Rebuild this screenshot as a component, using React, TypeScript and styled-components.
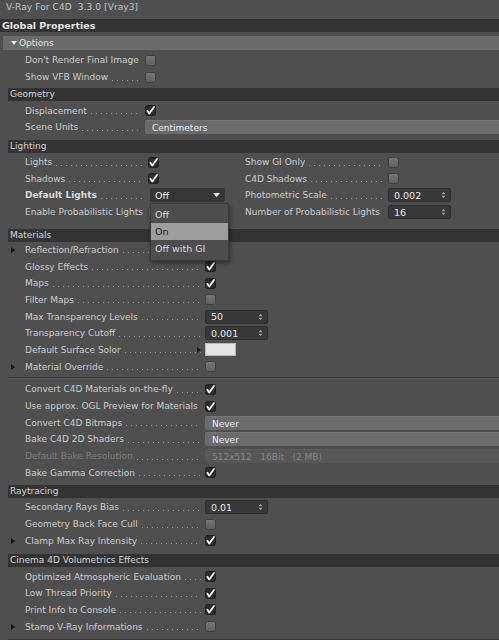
import React from "react";
import styled, { createGlobalStyle } from "styled-components";

type Control =
  | { kind: "check"; on: boolean }
  | { kind: "spin"; value: string }
  | { kind: "select"; value: string; disabled?: boolean }
  | { kind: "menu"; value: string; options: string[]; active: number }
  | { kind: "swatch"; color: string };

type Item = {
  label: string;
  control: Control;
  bold?: boolean;
  expand?: boolean;
  dim?: boolean;
};

const chk = (on: boolean): Control => ({ kind: "check", on });

const options: Item[] = [
  { label: "Don't Render Final Image", control: chk(false) },
  { label: "Show VFB Window", control: chk(false) },
];

const geometry: Item[] = [
  { label: "Displacement", control: chk(true) },
  { label: "Scene Units", control: { kind: "select", value: "Centimeters" } },
];

const lightingLeft: Item[] = [
  { label: "Lights", control: chk(true) },
  { label: "Shadows", control: chk(true) },
  {
    label: "Default Lights",
    bold: true,
    control: { kind: "menu", value: "Off", options: ["Off", "On", "Off with GI"], active: 1 },
  },
  { label: "Enable Probabilistic Lights", control: chk(false) },
];

const lightingRight: Item[] = [
  { label: "Show GI Only", control: chk(false) },
  { label: "C4D Shadows", control: chk(false) },
  { label: "Photometric Scale", control: { kind: "spin", value: "0.002" } },
  { label: "Number of Probabilistic Lights", control: { kind: "spin", value: "16" } },
];

const materialsA: Item[] = [
  { label: "Reflection/Refraction", expand: true, control: chk(false) },
  { label: "Glossy Effects", control: chk(true) },
  { label: "Maps", control: chk(true) },
  { label: "Filter Maps", control: chk(false) },
  { label: "Max Transparency Levels", control: { kind: "spin", value: "50" } },
  { label: "Transparency Cutoff", control: { kind: "spin", value: "0.001" } },
  { label: "Default Surface Solor", control: { kind: "swatch", color: "#e4e4e4" } },
  { label: "Material Override", expand: true, control: chk(false) },
];

const materialsB: Item[] = [
  { label: "Convert C4D Materials on-the-fly", control: chk(true) },
  { label: "Use approx. OGL Preview for Materials", control: chk(true) },
  { label: "Convert C4D Bitmaps", control: { kind: "select", value: "Never" } },
  { label: "Bake C4D 2D Shaders", control: { kind: "select", value: "Never" } },
  {
    label: "Default Bake Resolution",
    dim: true,
    control: { kind: "select", value: "512x512   16Bit   (2 MB)", disabled: true },
  },
  { label: "Bake Gamma Correction", control: chk(true) },
];

const raytracing: Item[] = [
  { label: "Secondary Rays Bias", control: { kind: "spin", value: "0.01" } },
  { label: "Geometry Back Face Cull", control: chk(false) },
  { label: "Clamp Max Ray Intensity", expand: true, control: chk(true) },
];

const volumetrics: Item[] = [
  { label: "Optimized Atmospheric Evaluation", control: chk(true) },
  { label: "Low Thread Priority", control: chk(true) },
  { label: "Print Info to Console", control: chk(true) },
  { label: "Stamp V-Ray Informations", expand: true, control: chk(false) },
];

const CheckBox = ({ on }: { on: boolean }) => (
  <Box $on={on}>
    {on && (
      <svg width="11" height="11" viewBox="0 0 11 11">
        <path
          d="M2.4 5.8 L4.2 8.6 L9 2"
          fill="none"
          stroke="#f2f2f2"
          strokeWidth="1.8"
          strokeLinecap="round"
          strokeLinejoin="round"
        />
      </svg>
    )}
  </Box>
);

const Arrows = () => (
  <svg width="5" height="8" viewBox="0 0 5 8">
    <path d="M0.5 3.2 L2.5 0.8 L4.5 3.2 Z" fill="#9a9a9a" />
    <path d="M0.5 4.8 L2.5 7.2 L4.5 4.8 Z" fill="#9a9a9a" />
  </svg>
);

const renderControl = (c: Control) => {
  switch (c.kind) {
    case "check":
      return <CheckBox on={c.on} />;
    case "spin":
      return (
        <Spin>
          <span>{c.value}</span>
          <Arrows />
        </Spin>
      );
    case "select":
      return <Select $disabled={c.disabled}>{c.value}</Select>;
    case "swatch":
      return (
        <SwatchWrap>
          <Tri $color="#1c1c1c" />
          <Swatch style={{ background: c.color }} />
        </SwatchWrap>
      );
    case "menu":
      return (
        <MenuWrap>
          <DarkSelect>
            <span>{c.value}</span>
            <svg width="7" height="4" viewBox="0 0 7 4">
              <path d="M0 0 L7 0 L3.5 4 Z" fill="#e8e8e8" />
            </svg>
          </DarkSelect>
          <Popup>
            {c.options.map((o, i) => (
              <PopupItem key={o} $active={i === c.active}>
                {o}
              </PopupItem>
            ))}
          </Popup>
        </MenuWrap>
      );
  }
};

const Rows = ({ items, lead, label }: { items: Item[]; lead: number; label: number }) => (
  <>
    {items.map((it) => (
      <Row key={it.label} $lead={lead} $label={label}>
        <Lead>{it.expand && <Tri $color="#151515" />}</Lead>
        <Label $bold={it.bold} $dim={it.dim}>
          <span>{it.label}</span>
          <Dots />
        </Label>
        <Cell>{renderControl(it.control)}</Cell>
      </Row>
    ))}
  </>
);

export default function App() {
  return (
    <>
      <GlobalStyle />
      <Panel>
        <Title>V-Ray For C4D  3.3.0 [Vray3]</Title>
        <MainHeader>Global Properties</MainHeader>
        <OptionsBar>
          <svg width="6" height="4" viewBox="0 0 6 4">
            <path d="M0 0 L6 0 L3 4 Z" fill="#ededed" />
          </svg>
          Options
        </OptionsBar>
        <Body $top={2} $bottom={3}>
          <Rows items={options} lead={25} label={120} />
        </Body>

        <Header>Geometry</Header>
        <Body $top={1} $bottom={4}>
          <Rows items={geometry} lead={25} label={120} />
        </Body>

        <Header>Lighting</Header>
        <Body $top={1} $bottom={8}>
          <TwoCols>
            <div>
              <Rows items={lightingLeft} lead={25} label={123} />
            </div>
            <div>
              <Rows items={lightingRight} lead={5} label={143} />
            </div>
          </TwoCols>
        </Body>

        <Header>Materials</Header>
        <Body $top={0} $bottom={2}>
          <Rows items={materialsA} lead={25} label={180} />
        </Body>
        <Divider />
        <Body $top={2} $bottom={4}>
          <Rows items={materialsB} lead={25} label={180} />
        </Body>

        <Header>Raytracing</Header>
        <Body $top={1} $bottom={5}>
          <Rows items={raytracing} lead={25} label={180} />
        </Body>

        <Header>Cinema 4D Volumetrics Effects</Header>
        <Body $top={1} $bottom={4}>
          <Rows items={volumetrics} lead={25} label={180} />
        </Body>
        <Divider />
      </Panel>
    </>
  );
}

const GlobalStyle = createGlobalStyle`
  html, body {
    margin: 0;
    padding: 0;
    background: #4f4f4f;
  }
  #root {
    width: 499px;
    height: 640px;
  }
`;

const Panel = styled.div`
  width: 499px;
  height: 640px;
  overflow: hidden;
  background: #4f4f4f;
  color: #cdcdcd;
  font-family: "DejaVu Sans", "Liberation Sans", sans-serif;
  font-size: 9px;
`;

const Title = styled.div`
  height: 19px;
  padding-left: 6px;
  line-height: 15px;
  white-space: pre;
  color: #c4c4c4;
  letter-spacing: 0.1px;
`;

const MainHeader = styled.div`
  height: 13px;
  line-height: 13px;
  padding-left: 2px;
  margin-bottom: 4px;
  background: #333333;
  color: #e2e2e2;
  font-weight: bold;
  font-size: 9.5px;
`;

const OptionsBar = styled.div`
  height: 14px;
  margin-left: 3px;
  padding-left: 8px;
  display: flex;
  align-items: center;
  gap: 2px;
  background: #6a6a6a;
  color: #e4e4e4;
`;

const Header = styled.div`
  height: 13px;
  line-height: 13px;
  margin-left: 8px;
  padding-left: 2px;
  background: #333333;
  color: #d4d4d4;
`;

const Body = styled.div<{ $top: number; $bottom: number }>`
  padding: ${(p) => p.$top}px 0 ${(p) => p.$bottom}px;
`;

const TwoCols = styled.div`
  display: grid;
  grid-template-columns: 240px 1fr;
`;

const Row = styled.div<{ $lead: number; $label: number }>`
  height: 16.7px;
  display: grid;
  grid-template-columns: ${(p) => p.$lead}px ${(p) => p.$label}px 1fr;
  align-items: center;
`;

const Lead = styled.div`
  display: flex;
  align-items: center;
  padding-left: 11px;
`;

const Tri = styled.span<{ $color: string }>`
  width: 0;
  height: 0;
  border-left: 4px solid ${(p) => p.$color};
  border-top: 3px solid transparent;
  border-bottom: 3px solid transparent;
`;

const Label = styled.div<{ $bold?: boolean; $dim?: boolean }>`
  display: flex;
  align-items: center;
  min-width: 0;
  white-space: nowrap;
  padding-right: 4px;
  font-weight: ${(p) => (p.$bold ? "bold" : "normal")};
  color: ${(p) => (p.$dim ? "#7d7d7d" : p.$bold ? "#dadada" : "#cdcdcd")};
`;

const Dots = styled.span`
  flex: 1;
  min-width: 0;
  height: 1px;
  margin: 6px 0 0 4px;
  background-image: linear-gradient(to right, #959595 1px, transparent 1px);
  background-size: 5px 1px;
  background-repeat: repeat-x;
`;

const Cell = styled.div`
  display: flex;
  align-items: center;
  min-width: 0;
`;

const Box = styled.div<{ $on: boolean }>`
  width: 11px;
  height: 11px;
  box-sizing: border-box;
  border-radius: 2.5px;
  border: 1px solid ${(p) => (p.$on ? "#1f1f1f" : "#3e3e3e")};
  background: ${(p) =>
    p.$on ? "#2c2c2c" : "linear-gradient(#767676, #5f5f5f)"};
  display: flex;
  align-items: center;
  justify-content: center;
  svg {
    margin: -1px;
  }
`;

const Spin = styled.div`
  width: 63px;
  height: 14px;
  box-sizing: border-box;
  padding: 0 4px 0 5px;
  display: flex;
  align-items: center;
  justify-content: space-between;
  background: #383838;
  border: 1px solid #2c2c2c;
  border-radius: 2px;
  color: #e8e8e8;
  font-size: 9.5px;
`;

const Select = styled.div<{ $disabled?: boolean }>`
  flex: 1;
  height: 14px;
  line-height: 14px;
  padding-left: 7px;
  border-radius: 2px 0 0 2px;
  white-space: pre;
  background: ${(p) => (p.$disabled ? "#575757" : "#6b6b6b")};
  color: ${(p) => (p.$disabled ? "#868686" : "#ececec")};
  border-top: 1px solid ${(p) => (p.$disabled ? "#5c5c5c" : "#777777")};
  box-sizing: border-box;
`;

const SwatchWrap = styled.div`
  display: flex;
  align-items: center;
  gap: 4px;
  margin-left: -8px;
`;

const Swatch = styled.div`
  width: 29px;
  height: 11px;
  border: 1px solid #b8b8b8;
`;

const MenuWrap = styled.div`
  position: relative;
  margin-left: 2px;
`;

const DarkSelect = styled.div`
  width: 75px;
  height: 14px;
  box-sizing: border-box;
  padding: 0 5px 0 5px;
  display: flex;
  align-items: center;
  justify-content: space-between;
  background: #363636;
  border-radius: 2px;
  color: #ececec;
  font-size: 9.5px;
`;

const Popup = styled.div`
  position: absolute;
  top: 15px;
  left: 0;
  width: 77px;
  padding: 2px 0 3px;
  background: #4d4d4d;
  border: 1px solid #3a3a3a;
  box-shadow: 1px 2px 4px rgba(0, 0, 0, 0.45);
  z-index: 5;
`;

const PopupItem = styled.div<{ $active: boolean }>`
  height: 17px;
  line-height: 17px;
  padding-left: 4px;
  font-size: 9.5px;
  background: ${(p) => (p.$active ? "#9d9d9d" : "transparent")};
  color: ${(p) => (p.$active ? "#1e1e1e" : "#d8d8d8")};
`;

const Divider = styled.div`
  margin-left: 8px;
  height: 1px;
  background: #3a3a3a;
  border-bottom: 1px solid #575757;
`;
